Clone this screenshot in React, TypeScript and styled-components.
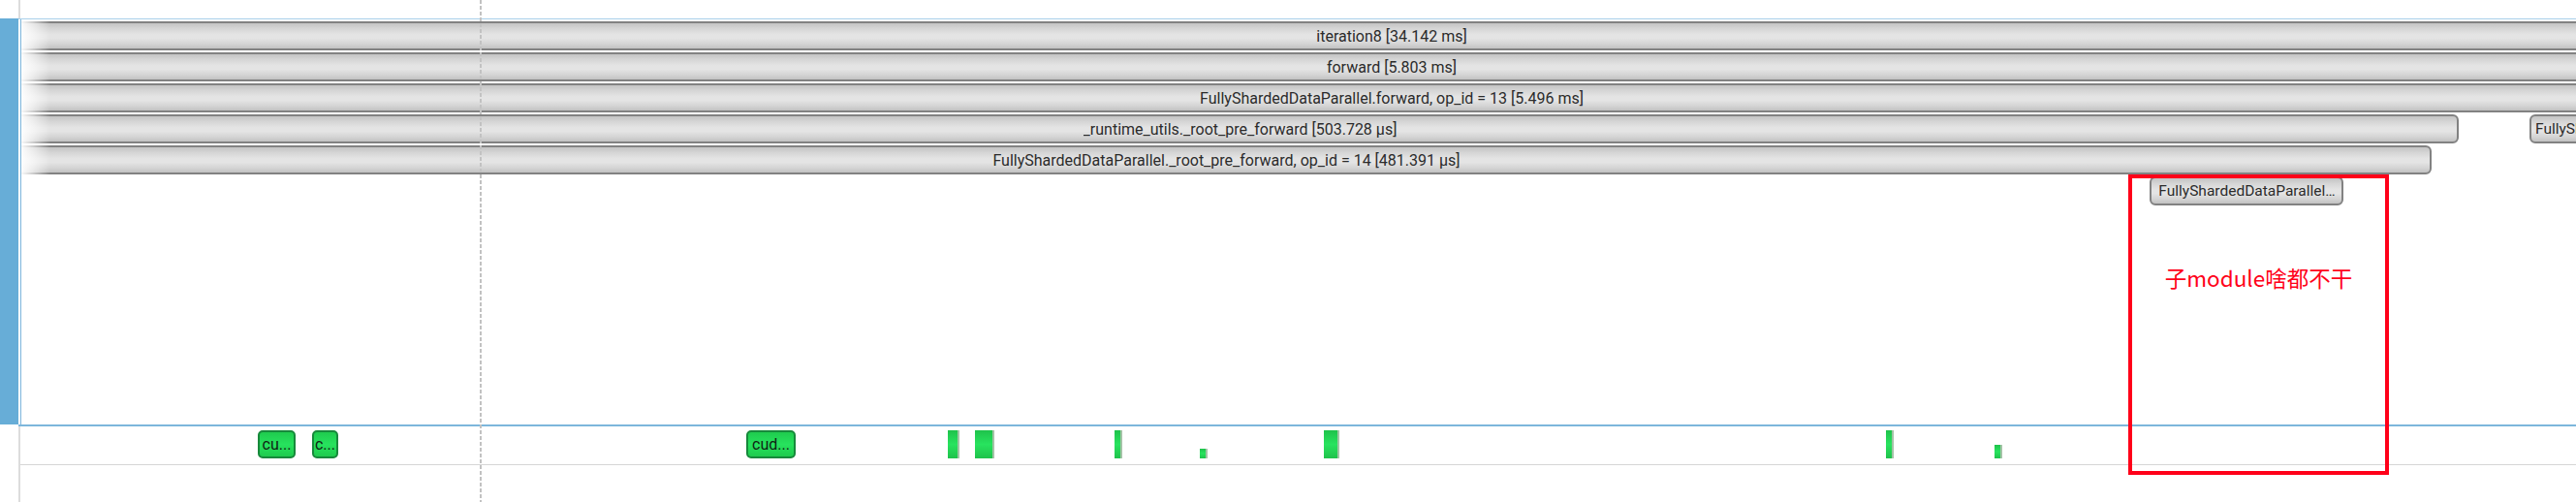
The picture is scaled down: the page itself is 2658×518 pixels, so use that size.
import React from "react";
import styled, { createGlobalStyle } from "styled-components";

const GlobalStyle = createGlobalStyle`
  html, body { margin: 0; padding: 0; background: #ffffff; overflow: hidden; }
  body { font-family: Roboto, "Liberation Sans", sans-serif; }
`;

type SliceData = {
  left: number;
  width: number;
  label: string;
  clipLeft?: boolean;
  small?: boolean;
};

const ORIGIN = 22; // x of track content
const rows: SliceData[][] = [
  [{ left: -12, width: 2840, label: "iteration8 [34.142 ms]", clipLeft: true }],
  [{ left: -12, width: 2840, label: "forward [5.803 ms]", clipLeft: true }],
  [
    {
      left: -12,
      width: 2840,
      label: "FullyShardedDataParallel.forward, op_id = 13 [5.496 ms]",
      clipLeft: true,
    },
  ],
  [
    {
      left: -12,
      width: 2537 - ORIGIN + 12,
      label: "_runtime_utils._root_pre_forward [503.728 μs]",
      clipLeft: true,
    },
    {
      left: 2610 - ORIGIN,
      width: 200,
      label: "FullyShardedDataParallel._pre_forward",
      small: true,
    },
  ],
  [
    {
      left: -12,
      width: 2509 - ORIGIN + 12,
      label: "FullyShardedDataParallel._root_pre_forward, op_id = 14 [481.391 μs]",
      clipLeft: true,
    },
  ],
  [{ left: 2218 - ORIGIN, width: 200, label: "FullyShardedDataParallel…", small: true }],
];

type Kernel = { x: number; w: number; label?: string; h?: number };
const KORIGIN = 21;
const kernels: Kernel[] = [
  { x: 266, w: 39, label: "cu..." },
  { x: 322, w: 27, label: "c..." },
  { x: 770, w: 51, label: "cud..." },
  { x: 978, w: 12 },
  { x: 1006, w: 12 },
  { x: 1016, w: 10 },
  { x: 1150, w: 8 },
  { x: 1238, w: 8, h: 10 },
  { x: 1366, w: 16 },
  { x: 1946, w: 8 },
  { x: 2058, w: 8, h: 14 },
];

const Page = styled.div`
  position: relative;
  width: 2658px;
  height: 518px;
  overflow: hidden;
  display: flex;
  flex-direction: column;
  background: #ffffff;
`;

const Header = styled.div`
  display: flex;
  height: 19px;
  flex: none;
`;

const Gutter = styled.div`
  width: 19px;
  flex: none;
  border-right: 2px solid #dcdcdc;
  background: #ffffff;
`;

const TrackGroup = styled.div`
  display: flex;
  height: 421px;
  flex: none;
`;

const TrackLabel = styled.div`
  width: 19px;
  height: 419px;
  flex: none;
  background: #67add7;
`;

const TrackFrame = styled.div`
  flex: 1;
  display: flex;
  border-top: 1px solid #a9d0ea;
  border-bottom: 2px solid #7db6dc;
  padding-left: 2px;
`;

const TrackBody = styled.div`
  position: relative;
  flex: 1;
  border-left: 1px solid #7db6dc;
  padding-top: 2px;
  overflow: hidden;
  display: flex;
  flex-direction: column;
  gap: 2px;
`;

const Row = styled.div`
  position: relative;
  height: 30px;
  flex: none;
`;

const Slice = styled.div<{ $clipLeft?: boolean; $small?: boolean }>`
  position: absolute;
  top: 0;
  height: 30px;
  box-sizing: border-box;
  border: 2px solid #828282;
  border-radius: 6px;
  background: linear-gradient(
    to bottom,
    #c4c4c4 0%,
    #d6d6d6 22%,
    #e4e4e4 45%,
    #e4e4e4 60%,
    #d4d4d4 82%,
    #c2c2c2 100%
  );
  display: flex;
  align-items: center;
  justify-content: center;
  padding: 0 ${(p) => (p.$small ? 3 : 4)}px 0 ${(p) => (p.$clipLeft ? 16 : 4)}px;
  font-family: Roboto, "Liberation Sans", sans-serif;
  font-size: ${(p) => (p.$small ? 15.5 : 16)}px;
  color: #2b2b2b;
  white-space: nowrap;
  overflow: hidden;
`;

const SliceText = styled.span`
  overflow: hidden;
  text-overflow: ellipsis;
  white-space: nowrap;
`;

const LeftFade = styled.div`
  position: absolute;
  left: 0;
  top: 0;
  bottom: 0;
  width: 30px;
  pointer-events: none;
  background: linear-gradient(
    to right,
    rgba(255, 255, 255, 0.95) 0%,
    rgba(255, 255, 255, 0.6) 40%,
    rgba(255, 255, 255, 0) 100%
  );
`;

const KernelTrack = styled.div`
  display: flex;
  height: 40px;
  flex: none;
`;

const KernelBody = styled.div`
  position: relative;
  flex: 1;
  border-bottom: 1px solid #d6d6d6;
`;

const EmptyTrack = styled.div`
  display: flex;
  flex: 1;
`;

const Chip = styled.div`
  position: absolute;
  top: 4px;
  height: 29px;
  box-sizing: border-box;
  border: 2px solid #17893b;
  border-radius: 5px;
  background: linear-gradient(to bottom, #1fcb4e 0%, #27e25d 50%, #1fcb4e 100%);
  display: flex;
  align-items: center;
  justify-content: center;
  font-family: Roboto, "Liberation Sans", sans-serif;
  font-size: 16px;
  color: #0f2414;
  white-space: nowrap;
  overflow: hidden;
`;

const Bar = styled.div`
  position: absolute;
  bottom: 6px;
  box-sizing: border-box;
  border-right: 2px solid #a3c3a6;
  background: linear-gradient(to bottom, #1fc24b 0%, #28e35e 50%, #1fc24b 100%);
`;

const DashedLine = styled.div`
  position: absolute;
  left: 495px;
  top: 0;
  bottom: 0;
  width: 2px;
  pointer-events: none;
  background: repeating-linear-gradient(
    to bottom,
    #c2c2c2 0px,
    #c2c2c2 4px,
    transparent 4px,
    transparent 6px
  );
`;

const Annotation = styled.div`
  position: absolute;
  left: 2196px;
  top: 180px;
  width: 269px;
  height: 310px;
  box-sizing: border-box;
  border: 4px solid #ff0019;
  display: flex;
  justify-content: center;
  padding-top: 88px;
  pointer-events: none;
`;

const AnnotationText = styled.div`
  font-family: "Noto Sans CJK SC", "Noto Sans", sans-serif;
  font-size: 22.5px;
  font-weight: 400;
  line-height: 28px;
  height: 28px;
  color: #ff0019;
  white-space: nowrap;
`;

export default function App() {
  return (
    <>
      <GlobalStyle />
      <Page>
        <Header>
          <Gutter />
        </Header>
        <TrackGroup>
          <TrackLabel />
          <TrackFrame>
            <TrackBody>
              {rows.map((row, i) => (
                <Row key={i}>
                  {row.map((s, j) => (
                    <Slice
                      key={j}
                      $clipLeft={s.clipLeft}
                      $small={s.small}
                      style={{ left: s.left, width: s.width }}
                    >
                      <SliceText>{s.label}</SliceText>
                    </Slice>
                  ))}
                </Row>
              ))}
              <LeftFade />
            </TrackBody>
          </TrackFrame>
        </TrackGroup>
        <KernelTrack>
          <Gutter />
          <KernelBody>
            {kernels.map((k, i) =>
              k.label ? (
                <Chip key={i} style={{ left: k.x - KORIGIN, width: k.w }}>
                  {k.label}
                </Chip>
              ) : (
                <Bar
                  key={i}
                  style={{ left: k.x - KORIGIN, width: k.w, height: k.h ?? 29 }}
                />
              )
            )}
          </KernelBody>
        </KernelTrack>
        <EmptyTrack>
          <Gutter />
        </EmptyTrack>
        <DashedLine />
        <Annotation>
          <AnnotationText>子module啥都不干</AnnotationText>
        </Annotation>
      </Page>
    </>
  );
}
